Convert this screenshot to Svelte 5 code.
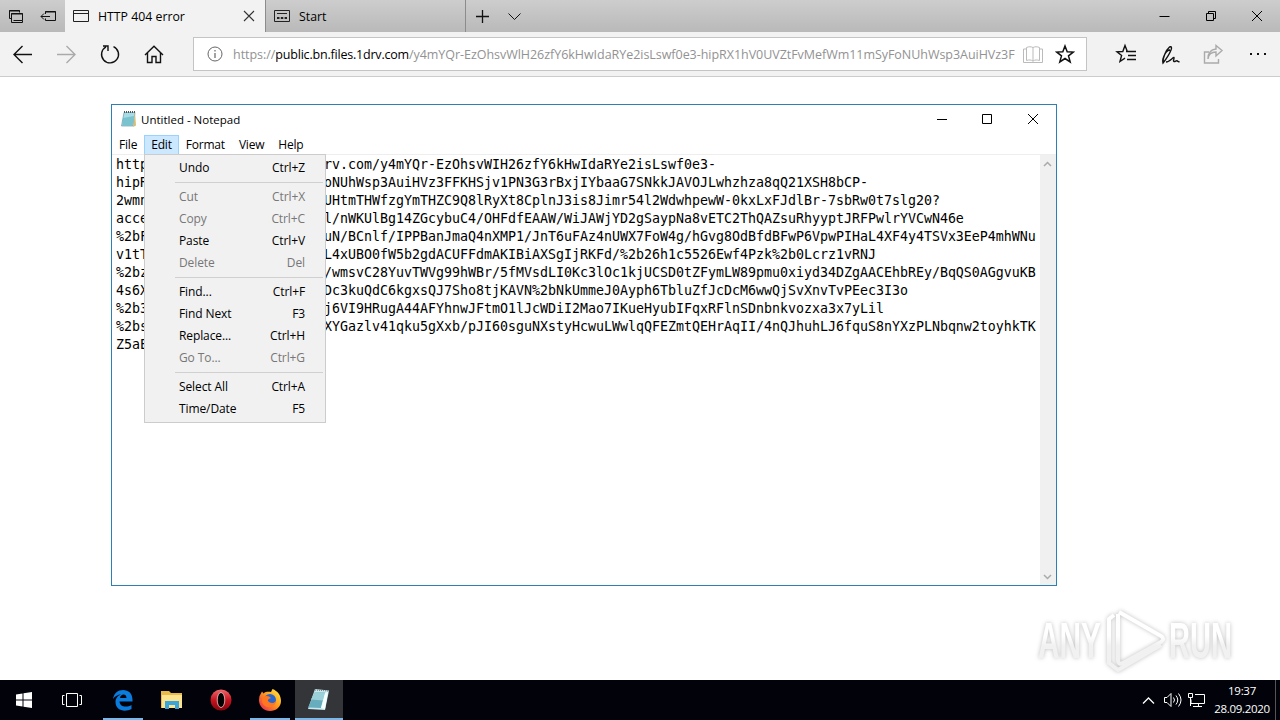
<script lang="ts">
    type MenuItem = { label: string; keys: string; off?: boolean }

    const host = 'public.bn.files.1drv.com'
    const path = '/y4mYQr-EzOhsvWlH26zfY6kHwIdaRYe2isLswf0e3-hipRX1hV0UVZtFvMefWm11mSyFoNUhWsp3AuiHVz3F'

    const menus = ['File', 'Edit', 'Format', 'View', 'Help']

    const groups: MenuItem[][] = [
        [{ label: 'Undo', keys: 'Ctrl+Z' }],
        [
            { label: 'Cut', keys: 'Ctrl+X', off: true },
            { label: 'Copy', keys: 'Ctrl+C', off: true },
            { label: 'Paste', keys: 'Ctrl+V' },
            { label: 'Delete', keys: 'Del', off: true },
        ],
        [
            { label: 'Find...', keys: 'Ctrl+F' },
            { label: 'Find Next', keys: 'F3' },
            { label: 'Replace...', keys: 'Ctrl+H' },
            { label: 'Go To...', keys: 'Ctrl+G', off: true },
        ],
        [
            { label: 'Select All', keys: 'Ctrl+A' },
            { label: 'Time/Date', keys: 'F5' },
        ],
    ]

    // start of the line, then the part right of the open menu
    const rows: [string, string][] = [
        ['http', 'rv.com/y4mYQr-EzOhsvWIH26zfY6kHwIdaRYe2isLswf0e3-'],
        ['hipR', 'oNUhWsp3AuiHVz3FFKHSjv1PN3G3rBxjIYbaaG7SNkkJAVOJLwhzhza8qQ21XSH8bCP-'],
        ['2wmn', 'UHtmTHWfzgYmTHZC9Q8lRyXt8CplnJ3is8Jimr54l2WdwhpewW-0kxLxFJdlBr-7sbRw0t7slg20?'],
        ['acce', 'l/nWKUlBg14ZGcybuC4/OHFdfEAAW/WiJAWjYD2gSaypNa8vETC2ThQAZsuRhyyptJRFPwlrYVCwN46e'],
        ['%2bF', 'uN/BCnlf/IPPBanJmaQ4nXMP1/JnT6uFAz4nUWX7FoW4g/hGvg8OdBfdBFwP6VpwPIHaL4XF4y4TSVx3EeP4mhWNu'],
        ['v1tT', 'L4xUBO0fW5b2gdACUFFdmAKIBiAXSgIjRKFd/%2b26h1c5526Ewf4Pzk%2b0Lcrz1vRNJ'],
        ['%2bz', '/wmsvC28YuvTWVg99hWBr/5fMVsdLI0Kc3lOc1kjUCSD0tZFymLW89pmu0xiyd34DZgAACEhbREy/BqQS0AGgvuKB'],
        ['4s6X', 'Dc3kuQdC6kgxsQJ7Sho8tjKAVN%2bNkUmmeJ0Ayph6TbluZfJcDcM6wwQjSvXnvTvPEec3I3o'],
        ['%2b3', 'j6VI9HRugA44AFYhnwJFtmO1lJcWDiI2Mao7IKueHyubIFqxRFlnSDnbnkvozxa3x7yLil'],
        ['%2bs', 'XYGazlv41qku5gXxb/pJI60sguNXstyHcwuLWwlqQFEZmtQEHrAqII/4nQJhuhLJ6fquS8nYXzPLNbqnw2toyhkTK'],
        ['Z5aE', ''],
    ]
</script>

<div class="screen">
    <header class="tabs">
        <div class="tab-tools">
            <svg width="65" height="32" fill="none" stroke="#111">
                <path d="M11.5 18.500h-2v-8h10v2M9 11h11M13.500 20.500h9v-7h-11v9h11v-2M11 14h12" />
                <path d="M45.500 14v-2.500h10v9h-10v-2M45 12h11M41 16.500h9M44 13.500l-3 3 3 3" />
            </svg>
        </div>
        <div class="tab active">
            <svg width="17" height="14" fill="none" stroke="#222"><path d="M.5 1.500h15v11h-15zM0 4.500h16" /></svg>
            <span class="title">HTTP 404 error</span>
            <svg width="12" height="12" stroke="#333" stroke-width="1.100"><path d="M1 1l10 10M11 1L1 11" /></svg>
        </div>
        <div class="tab">
            <svg width="17" height="14" fill="none" stroke="#222">
                <path d="M.5 1.500h15v11h-15zM3 4.500h10" /><path d="M3 9h10" stroke-width="2" stroke-dasharray="2.500 1.300" />
            </svg>
            <span class="title">Start</span>
        </div>
        <svg width="60" height="32" fill="none" stroke="#111">
            <path d="M10 16.500h13M16.500 10v13" stroke-width="1.300" /><path d="M42.500 13.500l6 6 6-6" />
        </svg>
        <div class="grow"></div>
        <svg width="138" height="32" fill="none" stroke="#000">
            <path d="M17.500 16.500h10M64.500 13.500h7v7h-7zM66.500 13.500v-2h7v7h-2M110 11l10 10M120 11l-10 10" />
        </svg>
    </header>

    <div class="toolbar">
        <svg width="193" height="44" fill="none" stroke="#111" stroke-width="1.400">
            <path d="M32 22.500H14M22.500 14l-8.500 8.500 8.500 8.500" />
            <path d="M57 22.500h18M66.500 14l8.500 8.500-8.500 8.500" stroke="#aaa" />
            <path d="M113.500 14.600a8.500 8.500 0 1 1-7.500.300M103 14h5v5" />
            <path d="M145 23l9-8.800 9 8.800M147.500 21v9.500h4.500v-6h4v6h4.500V21" />
        </svg>
        <div class="address">
            <svg width="16" height="16" fill="none" stroke="#666"><circle cx="8" cy="8" r="7" /><path d="M8 7v5M8 4v1.500" stroke-width="1.200" /></svg>
            <span class="url">https://<b>{host}</b>{path}</span>
            <svg width="20" height="20" fill="none" stroke="#bbb">
                <path d="M10 3.500v14M10 3.500c-2-1-4-1-6.500 0v13c2.500-.8 4.500-.8 6.500.5 2-1.300 4-1.300 6.500-.5v-13c-2.500-1-4.500-1-6.500 0M3 5H.5v13.500h19V5H17" />
            </svg>
            <svg class="star" width="20" height="20" fill="none" stroke="#111" stroke-width="1.500">
                <path d="M10 2l2.200 5.800 6.100.3-4.800 3.800 1.700 6-5.200-3.400-5.200 3.400 1.700-6-4.800-3.800 6.100-.3z" />
            </svg>
        </div>
        <svg width="193" height="44" fill="none" stroke="#111" stroke-width="1.400">
            <path d="M41 19.500h-.700L38 13.500l-2.200 6-5.800.3 4.600 3.700-1.600 6 5-3.300M39 19.500h10M41 23.500h8M40 27.500h9" />
            <path d="M76 31c-.5-5 3-13 6.500-16 2-1 2.500 1 1.500 3-1.500 4-4 8-8 13 0 0-1-4 2-9 1-2 3-4 5-4M79 30c4 0 7-5 8-4.500.8.500-1.500 3.500 0 4s2.500-2 4 0l1.500.500" />
            <path d="M122 20h-4.500v11h14v-4M121 27c.5-5 3-7 8-7v4l6-5.500-6-5v3.500c-5 .5-8 4-8 10z" stroke="#aaa" />
            <path d="M163 22h2M170 22h2M177 22h2" stroke-width="2" />
        </svg>
    </div>

    <main>
        <svg class="watermark" width="210" height="76" viewBox="0 0 210 76">
            <defs><linearGradient id="fade" gradientUnits="userSpaceOnUse" x1="0" x2="0" y1="32" y2="42"><stop stop-color="#fff" /><stop offset="1" stop-color="#f1f1f1" /></linearGradient></defs>
            <g class="letters" fill="url(#fade)">
                <text x="6" y="54" textLength="63" lengthAdjust="spacingAndGlyphs">ANY</text>
                <text x="137" y="54" textLength="63" lengthAdjust="spacingAndGlyphs">RUN</text>
            </g>
            <g fill="none" stroke="url(#fade)" stroke-linejoin="round">
                <path d="M87 8l42 24c3 2 3 4 0 6L91 59c-3 2-5 0-5-3V10" stroke-width="4" />
                <path d="M82 11l-5 4v44l9 7 43-25" stroke-width="4" />
            </g>
        </svg>
    </main>

    <footer class="taskbar">
        <div class="task">
            <svg width="16" height="16" fill="#fff"><path d="M0 2.500l6.500-1v6H0zM7.500 1.300L16 0v7.500H7.500zM0 8.500h6.500v6L0 13.600zM7.500 8.500H16V16l-8.500-1.300z" /></svg>
        </div>
        <div class="task view">
            <svg width="20" height="16" fill="none" stroke="#fff"><path d="M4.500 1.500h11v13h-11zM2.500 3.500h-2v9h2M17.500 3.500h2v9h-2" /></svg>
        </div>
        <div class="task open">
            <svg width="22" height="22"><path fill="#0b7bdc" d="M1 10C2 4 6 1 11 1c6 0 10 4 9.500 11.500H7.500c.5 6 7.500 6 12 3.500v4c-7 3.500-16 1.500-16-7C3.500 9 6 6.500 9 5.500 6 5.500 3 7 1 10zm7-1h6.500c0-5-6-4.500-6.500 0z" /></svg>
        </div>
        <div class="task">
            <svg width="22" height="20">
                <path fill="#e9b94b" d="M0 1h8l2 2h11v15H0z" /><path fill="#fde38d" d="M1 5h20v13H1z" />
                <path fill="#3aa5dc" d="M4 11h14v8h-4v-4H8v4H4z" />
            </svg>
        </div>
        <div class="task">
            <svg width="22" height="22">
                <defs><linearGradient id="red" x2="0" y2="1"><stop stop-color="#f2686d" /><stop offset=".5" stop-color="#c61420" /><stop offset="1" stop-color="#85050c" /></linearGradient></defs>
                <circle cx="11" cy="11" r="10.500" fill="url(#red)" /><ellipse cx="11" cy="11" rx="3.800" ry="7.500" fill="#000" stroke="#f6cccc" stroke-width=".8" />
            </svg>
        </div>
        <div class="task open">
            <svg width="24" height="24">
                <defs><linearGradient id="fox" x1="1" x2="0" y2="1"><stop stop-color="#fff04a" /><stop offset=".45" stop-color="#ff9d1c" /><stop offset="1" stop-color="#e91c58" /></linearGradient></defs>
                <path fill="url(#fox)" d="M1.500 8L4 3.500l1.500 2C8 3 12 4 13 4l1.500-3c5 2 8.500 6 8.500 12 0 6-5 10-11 10S1 18.500 1 12z" />
                <circle cx="12" cy="12" r="6" fill="#2767cf" /><path fill="#ff7820" d="M5 9c4-2 6-1 8 1-3 1-4 2-2 4 3 2 5 1 7-1-1 8-13 8-14 0z" />
            </svg>
        </div>
        <div class="task open current">
            <svg width="24" height="24"><path fill="#c8e9ef" d="M8 1l14 1.500L18 22 1 21z" /><path fill="#67adbd" d="M8 4l10 .5L14 20 1 19.500z" /><path fill="#9bd0d9" d="M8 4l10 .5-2 8-12-1z" /><path stroke="#707b7c" stroke-dasharray="1 1" d="M8 2l13 1" /><path fill="#f6ffff" d="M18 5l3-1-3 17-4-1z" /></svg>
        </div>
        <div class="grow"></div>
        <svg width="67" height="40" fill="none" stroke="#fff">
            <path d="M1 23.500l5.500-5.500 5.500 5.500" stroke-width="1.300" />
            <path d="M22.500 17.500h2.500l4-4v13l-4-4h-2.500zM31.500 17.500q2 2.500 0 5M34 15.500q3.500 4.500 0 9M36.500 13.500q5 6.500 0 13" />
            <path d="M53 14.500h9.500v9H49v-4M51 26.500h9M56.500 23v3M46.500 13.500h4v4h-4zM48.500 18v8" />
        </svg>
        <div class="clock"><span>19:37</span><span>28.09.2020</span></div>
        <div class="peek"></div>
    </footer>

    <section class="notepad">
        <div class="titlebar">
            <svg width="18" height="18">
                <path fill="#a7dce7" stroke="#6d9da9" stroke-width=".7" d="M4 2.500h11L13 16H1.500z" /><path fill="#54aebc" d="M3 8l11-2-1.500 9.500h-10z" opacity=".55" /><path fill="#d4bd78" d="M15 2.500l1 13-3 1.500z" /><path stroke="#555" stroke-dasharray="1 1" stroke-width="2" d="M4 2h11" />
            </svg>
            <span>Untitled - Notepad</span>
            <div class="grow"></div>
            <svg width="138" height="28" fill="none" stroke="#000"><path d="M19 14.500h10M64.500 9.500h9v9h-9zM110 9l10 10M120 9l-10 10" /></svg>
        </div>
        <nav>
            {#each menus as name}
                <span class:selected={name === 'Edit'}>{name}</span>
            {/each}
        </nav>
        <div class="editor">
            <div class="lines">
                {#each rows as [head, tail]}
                    <div class="line"><span class="head">{head}</span><span>{tail}</span></div>
                {/each}
            </div>
            <div class="scroll">
                <svg width="9" height="6" fill="none" stroke="#aaa" stroke-width="1.500"><path d="M1 5l3.500-3.500L8 5" /></svg>
                <svg width="9" height="6" fill="none" stroke="#aaa" stroke-width="1.500"><path d="M1 1l3.500 3.500L8 1" /></svg>
            </div>
        </div>
        <div class="dropdown">
            {#each groups as group, i}
                {#if i > 0}<hr />{/if}
                {#each group as item}
                    <div class="item" class:off={item.off}><span>{item.label}</span><span>{item.keys}</span></div>
                {/each}
            {/each}
        </div>
    </section>
</div>

<style>
    :global(body) {
        overflow: hidden;
    }

    .screen {
        position: relative;
        display: flex;
        flex-direction: column;
        width: 1280px;
        height: 720px;
        background: #fff;
        color: #000;
        font: 12px "Open Sans", "Noto Sans", sans-serif;
    }

    svg {
        flex: none;
        display: block;
    }

    .grow {
        flex: 1;
    }

    .tabs {
        display: flex;
        height: 32px;
        background: linear-gradient(#cdcdcd, #b9b9b9);
    }

    .tab-tools {
        width: 65px;
    }

    .tab {
        display: flex;
        align-items: center;
        box-sizing: border-box;
        width: 200px;
        padding: 0 10px 0 8px;
        border-right: 1px solid #8c8c8c;
    }

    .tab.active {
        width: 201px;
        background: #f2f2f2;
    }

    .title {
        flex: 1;
        margin-left: 8px;
        font-size: 12.3px;
    }

    .toolbar {
        display: flex;
        align-items: center;
        height: 44px;
        background: #f2f2f2;
        border-bottom: 1px solid #ccc;
    }

    .address {
        display: flex;
        align-items: center;
        box-sizing: border-box;
        width: 894px;
        height: 34px;
        padding: 0 11px 0 13px;
        background: #fff;
        border: 1px solid #c4c4c4;
    }

    .url {
        flex: 1;
        width: 0;
        margin: 0 8px 0 10px;
        color: #929292;
        font-size: 12.5px;
        letter-spacing: -0.04px;
        white-space: nowrap;
    }

    .url b {
        color: #000;
        font-weight: 400;
        letter-spacing: -0.2px;
    }

    .star {
        margin-left: 12px;
    }

    main {
        flex: 1;
        display: flex;
        justify-content: flex-end;
        align-items: flex-end;
        padding-right: 38px;
    }

    .watermark {
        overflow: visible;
        filter: drop-shadow(0 0 2px rgba(0, 0, 0, 0.25));
    }

    .letters {
        font: bold 50px "Liberation Sans", sans-serif;
    }

    .taskbar {
        display: flex;
        height: 40px;
        background: #02030a;
        color: #fff;
    }

    .task {
        display: flex;
        align-items: center;
        justify-content: center;
        width: 40px;
        margin: 0 5px 0 4px;
    }

    .task.view {
        margin: 0 6px 0 3px;
    }

    .task:nth-child(3) {
        margin-left: 5px;
    }

    .open {
        box-shadow: inset 0 -2px #76b9ed;
    }

    .current {
        width: 48px;
        margin: 0;
        background: #343539;
    }

    .clock {
        display: flex;
        flex-direction: column;
        align-items: center;
        width: 66px;
        padding-top: 2px;
        font-size: 11.5px;
        line-height: 18px;
        letter-spacing: -0.3px;
    }

    .peek {
        width: 4px;
        border-left: 1px solid #555;
    }

    .notepad {
        position: absolute;
        left: 111px;
        top: 104px;
        display: flex;
        flex-direction: column;
        box-sizing: border-box;
        width: 946px;
        height: 482px;
        background: #fff;
        border: 1px solid #2d7fb4;
    }

    .titlebar {
        display: flex;
        align-items: center;
        height: 28px;
        padding: 0 0 2px 8px;
    }

    .titlebar span {
        margin-left: 3px;
        font-size: 11.5px;
    }

    nav {
        display: flex;
        height: 19px;
        line-height: 18px;
        letter-spacing: -0.2px;
    }

    nav span {
        padding: 0 6px;
        border: 1px solid transparent;
        border-bottom: 0;
        box-sizing: border-box;
    }

    nav .selected {
        background: #cce8ff;
        border-color: #99d1ff;
    }

    .editor {
        flex: 1;
        display: flex;
        border-top: 1px solid #eee;
    }

    .lines {
        flex: 1;
        width: 0;
        padding: 1px 0 0 4px;
        font: 13.3px/18px "DejaVu Sans Mono", monospace;
        letter-spacing: -0.007px;
        white-space: nowrap;
    }

    .line {
        display: flex;
        height: 18px;
    }

    .head {
        width: 208px;
    }

    .scroll {
        display: flex;
        flex-direction: column;
        justify-content: space-between;
        align-items: center;
        box-sizing: border-box;
        width: 16px;
        padding: 6px 1px 5px 0;
        background: #f0f0f0;
    }

    .dropdown {
        position: absolute;
        left: 32px;
        top: 49px;
        box-sizing: border-box;
        width: 182px;
        height: 269px;
        padding: 2px;
        background: #f1f1f1;
        border: 1px solid #ccc;
    }

    .item {
        display: flex;
        justify-content: space-between;
        height: 22px;
        padding: 0 18px 0 32px;
        line-height: 22px;
        letter-spacing: -0.1px;
    }

    .off {
        color: #777;
    }

    hr {
        height: 1px;
        margin: 3px 0 3px 28px;
        background: #d0d0d0;
        border: 0;
    }
</style>
